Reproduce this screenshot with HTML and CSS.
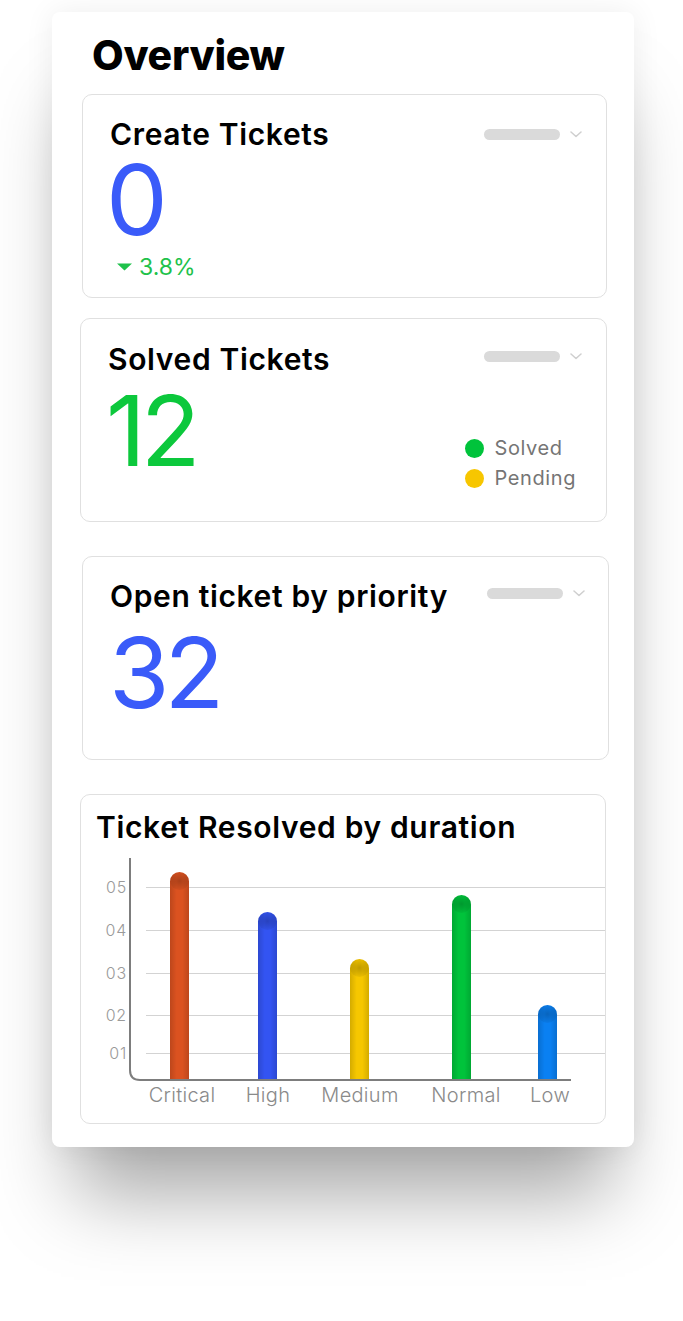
FILE: index.html
```html
<!DOCTYPE html>
<html lang="en">
<head>
<meta charset="utf-8">
<title>Overview</title>
<link rel="stylesheet" href="styles.css">
</head>
<body>
<div class="page">
<div class="panel">
  <h1 class="heading">Overview</h1>

  <section class="card card-create">
    <div class="card-head">
      <h2 class="card-title">Create Tickets</h2>
      <div class="filter filter-create"><span class="pill"></span><svg class="chev" width="12" height="7" viewBox="0 0 12 7"><polyline points="1,1 6,5.5 11,1" fill="none" stroke="#cfcfcf" stroke-width="1.5" stroke-linecap="round" stroke-linejoin="round"/></svg></div>
    </div>
    <div class="big big-blue big-create">0</div>
    <div class="delta"><svg class="tri" width="15" height="8" viewBox="0 0 15 8"><polygon points="0,0.5 15,0.5 7.5,7.5" fill="#1fc24b"/></svg><span>3.8%</span></div>
  </section>

  <section class="card card-solved">
    <div class="card-head">
      <h2 class="card-title">Solved Tickets</h2>
      <div class="filter"><span class="pill"></span><svg class="chev" width="12" height="7" viewBox="0 0 12 7"><polyline points="1,1 6,5.5 11,1" fill="none" stroke="#cfcfcf" stroke-width="1.5" stroke-linecap="round" stroke-linejoin="round"/></svg></div>
    </div>
    <div class="solved-body">
      <div class="big big-green big-solved">12</div>
      <ul class="legend">
        <li><span class="dot dot-green"></span>Solved</li>
        <li><span class="dot dot-yellow"></span>Pending</li>
      </ul>
    </div>
  </section>

  <section class="card card-open">
    <div class="card-head">
      <h2 class="card-title">Open ticket by priority</h2>
      <div class="filter"><span class="pill"></span><svg class="chev" width="12" height="7" viewBox="0 0 12 7"><polyline points="1,1 6,5.5 11,1" fill="none" stroke="#cfcfcf" stroke-width="1.5" stroke-linecap="round" stroke-linejoin="round"/></svg></div>
    </div>
    <div class="big big-blue big-open">32</div>
  </section>

  <section class="card card-chart">
    <h2 class="card-title chart-title">Ticket Resolved by duration</h2>
    <svg class="chart" width="524" height="268" viewBox="0 0 524 268">
      <defs>
        <linearGradient id="shade" x1="0" y1="0" x2="1" y2="0">
          <stop offset="0" stop-color="#000" stop-opacity="0.14"/>
          <stop offset="0.35" stop-color="#000" stop-opacity="0"/>
          <stop offset="0.65" stop-color="#000" stop-opacity="0"/>
          <stop offset="1" stop-color="#000" stop-opacity="0.14"/>
        </linearGradient>
        <radialGradient id="cap" cx="0.5" cy="0.5" r="0.5">
          <stop offset="0" stop-color="#000" stop-opacity="0.22"/>
          <stop offset="1" stop-color="#000" stop-opacity="0.05"/>
        </radialGradient>
      </defs>
      <g stroke="#d3d3d3" stroke-width="1">
        <line x1="65" y1="42.5" x2="524" y2="42.5"/>
        <line x1="65" y1="85.5" x2="524" y2="85.5"/>
        <line x1="65" y1="128.5" x2="524" y2="128.5"/>
        <line x1="65" y1="170.5" x2="524" y2="170.5"/>
        <line x1="65" y1="208.5" x2="524" y2="208.5"/>
      </g>
      <g class="ylab" text-anchor="end">
        <text x="46" y="48">05</text>
        <text x="46" y="91">04</text>
        <text x="46" y="134">03</text>
        <text x="46" y="176">02</text>
        <text x="46" y="214">01</text>
      </g>
      <g>
        <path d="M89 235 V36.5 A9.5 9.5 0 0 1 108 36.5 V235 Z" fill="#db5220"/>
        <path d="M89 235 V36.5 A9.5 9.5 0 0 1 108 36.5 V235 Z" fill="url(#shade)"/>
        <ellipse cx="98.5" cy="36" rx="9.5" ry="9" fill="url(#cap)"/>

        <path d="M177 235 V76.5 A9.5 9.5 0 0 1 196 76.5 V235 Z" fill="#3354f2"/>
        <path d="M177 235 V76.5 A9.5 9.5 0 0 1 196 76.5 V235 Z" fill="url(#shade)"/>
        <ellipse cx="186.5" cy="76" rx="9.5" ry="9" fill="url(#cap)"/>

        <path d="M269 235 V123.5 A9.5 9.5 0 0 1 288 123.5 V235 Z" fill="#f6c700"/>
        <path d="M269 235 V123.5 A9.5 9.5 0 0 1 288 123.5 V235 Z" fill="url(#shade)"/>
        <ellipse cx="278.5" cy="123" rx="9.5" ry="9" fill="url(#cap)"/>

        <path d="M371 235 V59.5 A9.5 9.5 0 0 1 390 59.5 V235 Z" fill="#00c33b"/>
        <path d="M371 235 V59.5 A9.5 9.5 0 0 1 390 59.5 V235 Z" fill="url(#shade)"/>
        <ellipse cx="380.5" cy="59" rx="9.5" ry="9" fill="url(#cap)"/>

        <path d="M457 235 V169.5 A9.5 9.5 0 0 1 476 169.5 V235 Z" fill="#0a80f2"/>
        <path d="M457 235 V169.5 A9.5 9.5 0 0 1 476 169.5 V235 Z" fill="url(#shade)"/>
        <ellipse cx="466.5" cy="169" rx="9.5" ry="9" fill="url(#cap)"/>
      </g>
      <path d="M49 13 V225 Q49 235 59 235 H490" fill="none" stroke="#7d7d7d" stroke-width="2"/>
      <g class="xlab" text-anchor="middle">
        <text x="101" y="257">Critical</text>
        <text x="187" y="257">High</text>
        <text x="279" y="257">Medium</text>
        <text x="385" y="257">Normal</text>
        <text x="469" y="257">Low</text>
      </g>
    </svg>
  </section>
</div>
</div>
</body>
</html>
```

FILE: styles.css
```css
html, body {
  margin: 0;
  padding: 0;
  background: #ffffff;
}

body {
  font-family: Inter, "Noto Sans", "DejaVu Sans", sans-serif;
  color: #000;
}

.page {
  box-sizing: border-box;
  min-height: 1321px;
  padding-top: 12px;
  overflow: hidden;
}

.panel {
  box-sizing: border-box;
  width: 582px;
  height: 1135px;
  margin: 0 0 0 52px;
  padding: 18px 27px 0 30px;
  background: #ffffff;
  border-radius: 8px;
  box-shadow: 0 0 30px rgba(0, 0, 0, 0.07), 0 70px 75px -22px rgba(0, 0, 0, 0.34);
}

.heading {
  margin: 0 0 14px 10px;
  font-size: 41px;
  line-height: 50px;
  font-weight: 800;
  letter-spacing: -0.3px;
}

.card {
  box-sizing: border-box;
  width: 525px;
  height: 204px;
  border: 1px solid #e0e0e0;
  border-radius: 10px;
  background: #fff;
}

.card-create {
  padding: 21px 24px 0 27px;
}

.card-solved {
  margin: 20px 0 0 -2px;
  width: 527px;
  padding: 22px 24px 28px 27px;
  display: flex;
  flex-direction: column;
}

.card-open {
  margin-top: 34px;
  width: 527px;
  padding: 21px 23px 0 27px;
}

.card-chart {
  margin: 34px 0 0 -2px;
  width: 526px;
  height: 330px;
  padding: 14px 0 0 0;
}

.card-head {
  display: flex;
  align-items: flex-start;
  justify-content: space-between;
}

.card-title {
  margin: 0;
  font-size: 30px;
  line-height: 36px;
  font-weight: 600;
  letter-spacing: 0.65px;
}

.chart-title {
  padding-left: 15px;
}

.filter {
  display: flex;
  align-items: center;
  gap: 10px;
  margin-top: 10px;
}

.filter-create {
  margin-top: 13px;
}

.pill {
  display: block;
  width: 76px;
  height: 11px;
  border-radius: 6px;
  background: #dadada;
}

.chev {
  display: block;
}

.big {
  font-size: 98px;
  line-height: 80px;
  font-weight: 400;
  letter-spacing: -5px;
}

.big-blue { color: #3a5bf9; }
.big-green { color: #0cc83c; }

.big-create { margin-top: 8px; margin-left: -4px; }
.big-solved { margin-top: 14px; margin-left: -2px; align-self: flex-start; }
.big-open { margin-top: 19px; margin-left: -1px; }

.delta {
  display: flex;
  align-items: center;
  gap: 7px;
  margin: 14px 0 0 7px;
  font-size: 23px;
  line-height: 26px;
  color: #1fc24b;
}

.tri {
  display: block;
}

.solved-body {
  flex: 1;
  display: flex;
  align-items: flex-start;
  justify-content: space-between;
}

.legend {
  list-style: none;
  align-self: flex-end;
  margin: 0 6px 0 0;
  padding: 0;
  display: flex;
  flex-direction: column;
  gap: 1px;
}

.legend li {
  display: flex;
  align-items: center;
  gap: 10px;
  font-size: 20px;
  line-height: 29px;
  color: #757575;
  font-weight: 400;
  letter-spacing: 0.6px;
}

.dot {
  display: block;
  width: 19px;
  height: 19px;
  border-radius: 50%;
}

.dot-green { background: #00c33b; }
.dot-yellow { background: #f7c600; }

.chart {
  display: block;
}

.ylab text {
  font-family: Inter, "Noto Sans", sans-serif;
  font-size: 16px;
  font-weight: 300;
  fill: #9a9a9a;
  letter-spacing: 0.8px;
}

.xlab text {
  font-family: Inter, "Noto Sans", sans-serif;
  font-size: 20px;
  font-weight: 300;
  fill: #8a8a8a;
  letter-spacing: 0.3px;
}
```
